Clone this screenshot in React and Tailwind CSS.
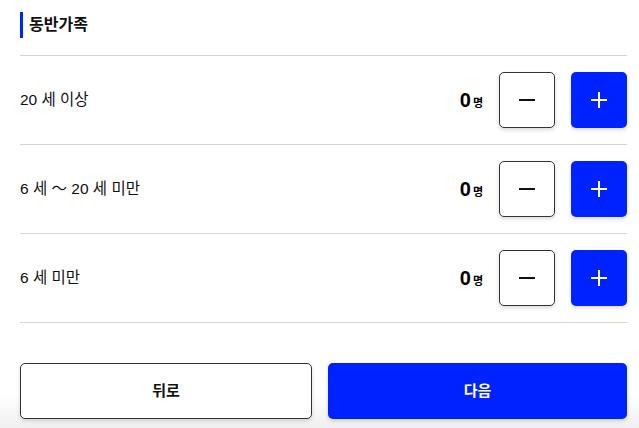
import React from "react";

const rows = ["20 세 이상", "6 세 〜 20 세 미만", "6 세 미만"];

function Row({ label }) {
  return (
    <div className="flex items-center border-b border-[#d4d4d4] py-4">
      <div className="flex-1 text-[15.5px] text-[#111]">{label}</div>
      <div className="mr-4 flex items-baseline">
        <span className="text-[20px] font-bold leading-none text-black">0</span>
        <span className="ml-[2px] text-[11px] font-bold leading-none text-black">명</span>
      </div>
      <button className="flex h-14 w-14 items-center justify-center rounded-[5px] border border-[#333] bg-white shadow-[0_2px_4px_rgba(0,0,0,0.15)]">
        <svg width="18" height="18" viewBox="0 0 18 18">
          <path d="M1 9h16" stroke="#111" strokeWidth="2" />
        </svg>
      </button>
      <button className="ml-4 flex h-14 w-14 items-center justify-center rounded-[5px] bg-[#0022ff] shadow-[0_2px_4px_rgba(0,0,0,0.15)]">
        <svg width="18" height="18" viewBox="0 0 18 18">
          <path d="M1 9h16M9 1v16" stroke="#fff" strokeWidth="2" />
        </svg>
      </button>
    </div>
  );
}

export default function App() {
  return (
    <div
      className="h-[428px] w-[639px] overflow-hidden bg-linear-to-b from-white from-[92%] to-[#f0f0f0]"
      style={{ fontFamily: '"Liberation Sans", "Noto Sans CJK KR", sans-serif' }}
    >
      <div className="pl-5 pr-3 pt-3">
        <div className="flex h-[26px] items-center border-l-[3px] border-[#0022ff] pl-[6px]">
          <span className="text-[16px] font-bold text-[#111]">동반가족</span>
        </div>
        <div className="mt-[17px] border-b border-[#d4d4d4]" />
        {rows.map((r) => (
          <Row key={r} label={r} />
        ))}
        <div className="mt-10 flex gap-4">
          <button className="flex h-14 w-[292px] items-center justify-center rounded-[5px] border border-[#333] bg-white text-[15px] font-bold text-[#111] shadow-[0_2px_4px_rgba(0,0,0,0.15)]">
            뒤로
          </button>
          <button className="flex h-14 flex-1 items-center justify-center rounded-[5px] bg-[#0022ff] text-[15px] font-bold text-white shadow-[0_2px_4px_rgba(0,0,0,0.15)]">
            다음
          </button>
        </div>
      </div>
    </div>
  );
}
